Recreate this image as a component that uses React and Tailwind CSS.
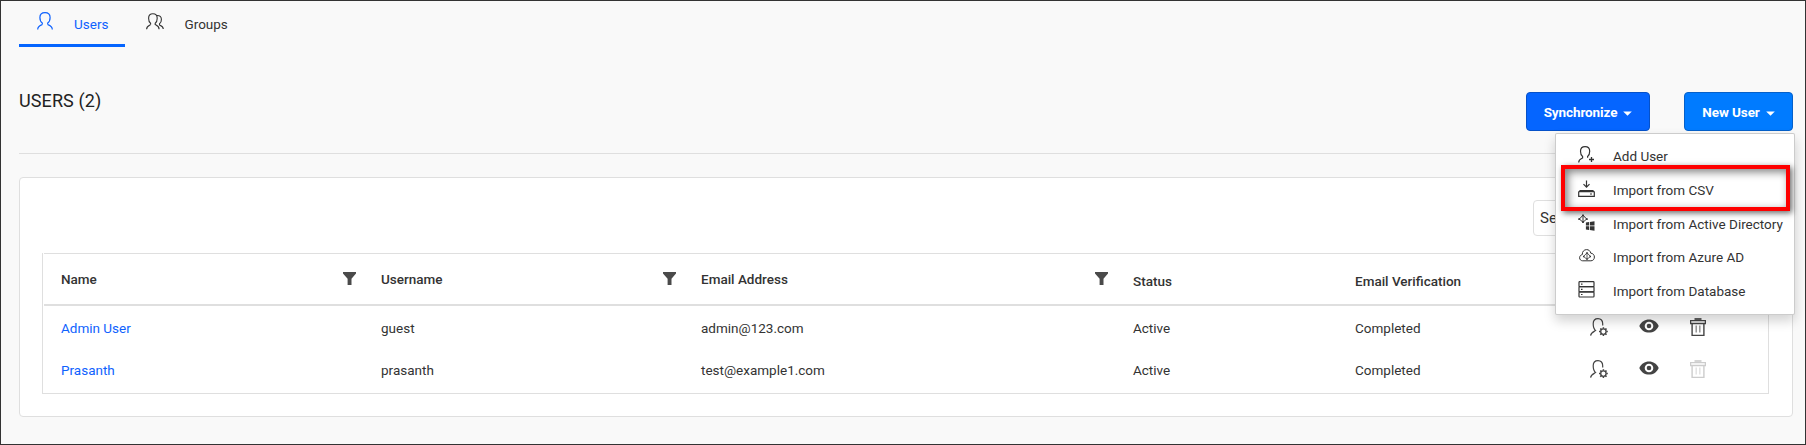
const HEAD =
  'M5.3 12.6V11C4 10.2 2.9 8 2.9 5.6C2.9 2.6 4.9 .7 8 .7C11.100 .7 13.100 2.600 13.100 5.600C13.100 8 12 10.200 10.700 11V12.600';

function UserIcon() {
  return (
    <svg width="16" height="18" viewBox="0 0 16 18" fill="none" stroke="currentColor" strokeWidth="1.2">
      <path d={HEAD} />
      <path d="M5.3 12.500C3.600 13.300 .7 14 .7 17.400M10.700 12.500C12.400 13.300 15.300 14 15.300 17.400" />
    </svg>
  );
}

function GroupIcon() {
  return (
    <svg width="18" height="17" viewBox="0 0 18 17" fill="none" stroke="currentColor" strokeWidth="1.1">
      <path d="M4.600 11.600V10.200C3.400 9.400 2.600 7.500 2.600 5.200C2.600 2.500 4.200 .7 6.900 .7C9.600 .7 11.200 2.500 11.200 5.200C11.200 7.500 10.400 9.400 9.200 10.200V11.600C11 12.400 13.100 13 13.100 16.200" />
      <path d="M4.600 11.600C3 12.400 .6 13 .6 16.200" />
      <path d="M10.800 2.600C13.800 2.300 15.400 3.900 15.400 6.400C15.400 8.400 14.700 9.900 13.500 10.700V12C15.200 12.700 17.300 13.300 17.300 15.900" />
    </svg>
  );
}

function AddUserIcon() {
  return (
    <svg width="17" height="17" viewBox="0 0 17 17" fill="none" stroke="currentColor" strokeWidth="1.2">
      <path d="M.7 16.400C.7 13.500 3 12.800 4.600 12V10.500C3.400 9.600 2.500 7.600 2.500 5.200C2.500 2.500 4.300 .6 7.100 .6C9.900 .6 11.700 2.500 11.700 5.200C11.700 7.600 10.800 9.600 9.600 10.500V11.800" />
      <path d="M13.500 11V16M11 13.500H16" strokeWidth="1.300" />
    </svg>
  );
}

function ImportIcon() {
  return (
    <svg width="17" height="17" viewBox="0 0 17 17" fill="none" stroke="currentColor" strokeWidth="1.200">
      <path d="M8.500 .5V7M5.500 4.200L8.500 7.200L11.500 4.200" />
      <path d="M2.200 10.500H14.800L16.300 12V16.300H.7V12ZM.7 11.700H16.300M12 14H14" />
    </svg>
  );
}

function DirectoryIcon() {
  return (
    <svg width="17" height="17" viewBox="0 0 17 17" fill="none" stroke="currentColor" strokeWidth="1">
      <path d="M5 1.200L8.600 5L5 8.300L1.400 5ZM5 1.200V8.300" />
      <path d="M4.200 .4H5.800V2H4.200ZM.3 4.300H1.900V5.900H.3ZM8.100 4.300H9.700V5.900H8.100ZM4.200 7.300H5.800V8.900H4.200Z" fill="currentColor" stroke="none" />
      <path d="M7.900 8.400L11 8V11.600H7.900ZM11.800 7.900L16.500 7.200V11.600H11.800ZM7.900 12.300H11V16L7.900 15.600ZM11.800 12.300H16.500V16.700L11.800 16.100Z" fill="currentColor" stroke="none" />
    </svg>
  );
}

function CloudIcon() {
  return (
    <svg width="16" height="13" viewBox="0 0 16 13" fill="none" stroke="currentColor" strokeWidth="1">
      <path d="M3.700 11.800C2 11.800 .6 10.600 .6 8.800C.6 7 1.700 6 3.300 5.600C3.100 2.700 5 .6 7.600 .6C9.700 .6 11.300 1.900 11.800 4.200C13.900 4.300 15.400 5.900 15.400 8C15.400 10.200 14 11.800 11.900 11.800Z" />
      <path d="M8 3.800L11.400 7.500L8 10.300L4.600 7.500ZM8 3.800V10.300" strokeWidth=".8" />
      <path d="M7.300 3.200H8.700V4.600H7.300ZM4 6.800H5.400V8.200H4ZM10.600 6.800H12V8.200H10.600ZM7.300 9.400H8.700V10.800H7.300Z" fill="currentColor" stroke="none" />
    </svg>
  );
}

function DatabaseIcon() {
  return (
    <svg width="17" height="17" viewBox="0 0 17 17" fill="none" stroke="currentColor" strokeWidth="1.200">
      <rect x="1" y=".7" width="15" height="4.900" rx=".8" />
      <rect x="1" y="5.700" width="15" height="5.100" rx=".8" />
      <rect x="1" y="10.900" width="15" height="5.100" rx=".8" />
      <path d="M3 3.100H4.500M3 8.300H4.500M3 13.500H4.500" />
    </svg>
  );
}

function UserGearIcon() {
  return (
    <svg width="18" height="18" viewBox="0 0 18 18" fill="none" stroke="currentColor" strokeWidth="1.200">
      <path d="M.6 17.600C.8 14.700 3.100 14.100 5.600 12.600C3.900 11.200 3.200 8.500 3.200 5.800C3.200 2.500 5 .7 8 .7C11 .7 12.700 2.500 12.700 5.800V7.600" />
      <circle cx="13.400" cy="13.600" r="2.700" strokeWidth="1.300" />
      <path d="M13.400 9.200V10.700M13.400 16.500V18M9 13.600H10.500M16.300 13.600H17.800M10.300 10.500L11.400 11.600M15.400 15.600L16.500 16.700M16.500 10.500L15.400 11.600M11.400 15.600L10.300 16.700" strokeWidth="1.500" />
    </svg>
  );
}

function EyeIcon() {
  return (
    <svg width="20" height="14" viewBox="0 0 20 14">
      <path d="M.3 7C2.200 2.700 5.700 .4 10 .4C14.300 .4 17.800 2.700 19.700 7C17.800 11.300 14.300 13.600 10 13.600C5.700 13.600 2.200 11.300 .3 7Z" fill="currentColor" />
      <circle cx="10" cy="7" r="3.300" fill="none" stroke="#fff" strokeWidth="2" />
    </svg>
  );
}

function TrashIcon() {
  return (
    <svg width="16" height="18" viewBox="0 0 16 18" fill="none" stroke="currentColor">
      <path d="M4.500 0H11.500V2.500H4.500Z" fill="currentColor" stroke="none" opacity=".85" />
      <path d="M.6 2.600H15.400V5.500H.6Z" strokeWidth="1.300" />
      <path d="M2.100 5.500V17.400H13.900V5.500" strokeWidth="1.400" />
      <path d="M6.200 7.500V14.500M9.800 7.500V14.500" strokeWidth="1.400" opacity=".6" />
    </svg>
  );
}

function FilterIcon() {
  return (
    <svg width="13" height="13" viewBox="0 0 13 13" fill="currentColor">
      <path d="M0 0H13V1.500L8.500 6.800V13H4.600V6.800L0 1.500Z" />
    </svg>
  );
}

function Caret() {
  return (
    <svg width="9" height="5" viewBox="0 0 9 5" fill="currentColor">
      <path d="M.2 .4H8.800L4.500 4.700Z" />
    </svg>
  );
}

const menuItems = [
  { label: 'Add User', Icon: AddUserIcon },
  { label: 'Import from CSV', Icon: ImportIcon, marked: true },
  { label: 'Import from Active Directory', Icon: DirectoryIcon },
  { label: 'Import from Azure AD', Icon: CloudIcon },
  { label: 'Import from Database', Icon: DatabaseIcon },
];

const users = [
  { name: 'Admin User', username: 'guest', email: 'admin@123.com' },
  { name: 'Prasanth', username: 'prasanth', email: 'test@example1.com', locked: true },
];

function Menu() {
  return (
    <ul className="absolute top-[41px] -right-[2px] z-10 flex h-[182px] w-[240px] flex-col rounded-xs border border-black/20 bg-white pt-[5.45px] shadow-[0_6px_12px_rgba(0,0,0,0.175)]">
      {menuItems.map(({ label, Icon, marked }) => (
        <li key={label} className="relative flex h-[33.7px] shrink-0 items-center pl-[22px] text-[#333]">
          <span className="-mt-[3px] flex w-[17px] justify-center">
            <Icon />
          </span>
          <span className="ml-[18px] whitespace-nowrap">{label}</span>
          {marked && (
            <span className="absolute -top-[8px] left-[5px] z-10 h-[46px] w-[229px] border-4 border-[#fe0000] shadow-[2px_2px_6px_rgba(0,0,0,0.6),inset_3px_3px_8px_rgba(0,0,0,0.5)]" />
          )}
        </li>
      ))}
    </ul>
  );
}

function HeaderCell({ children, filter }) {
  return (
    <div className={`flex items-center justify-between pr-[8px] pl-[17px] ${filter ? '' : 'pt-[4px]'}`}>
      {children}
      {filter && (
        <span className="-mt-px text-[#4a4a4a]">
          <FilterIcon />
        </span>
      )}
    </div>
  );
}

export default function App() {
  return (
    <div className="flex h-[445px] w-[1806px] flex-col overflow-hidden border border-[#333] bg-[#f9f9f9] pr-[12px] pl-[18px] font-['Roboto',sans-serif] text-[13.5px] leading-[20px] text-[#333]">
      <nav className="flex h-[46px] shrink-0">
        <div className="flex w-[106px] border-b-[3px] border-[#0565ff] pt-[11px] pl-[18px] text-[#0f62fe]">
          <UserIcon />
          <span className="mt-[2px] ml-[21px]">Users</span>
        </div>
        <div className="flex pt-[12px] pl-[21px]">
          <GroupIcon />
          <span className="mt-[1px] ml-[20.5px]">Groups</span>
        </div>
      </nav>

      <header className="flex h-[107px] shrink-0 justify-between border-b border-[#dfdfdf] pt-[45px]">
        <h1 className="mt-[-3px] text-[18px] leading-[24px] tracking-[0.1px] text-[#222]">USERS (2)</h1>
        <div className="flex h-[39px] gap-[34px] font-bold text-white">
          <button className="flex w-[124px] items-center justify-center gap-[6px] rounded border border-[#0551c9] bg-[#0565ff] tracking-[-0.1px]">
            Synchronize <span className="mt-[4px]"><Caret /></span>
          </button>
          <div className="relative font-normal">
            <button className="flex h-full w-[109px] items-center justify-center gap-[6px] rounded border border-[#0560c9] bg-[#007bff] font-bold tracking-[-0.1px]">
              New User <span className="mt-[4px]"><Caret /></span>
            </button>
            <Menu />
          </div>
        </div>
      </header>

      <main className="mt-[23px] h-[240px] shrink-0 rounded border border-[#dfdfdf] bg-white pr-[23px] pl-[22px]">
        <div className="flex h-[75px] justify-end pt-[22px]">
          <div className="flex h-[36px] w-[236px] items-center rounded border border-[#dfdfdf] pl-[6px] text-[15px]">Search</div>
        </div>
        <section className="h-[141px] border-x border-b border-[#dfdfdf]">
          <div className="ml-px grid h-[53px] grid-cols-[320px_320px_432px_222px_1fr] border-t border-b-2 border-t-[#dfdfdf] border-b-[#dfdfdf] font-medium">
            <HeaderCell filter>Name</HeaderCell>
            <HeaderCell filter>Username</HeaderCell>
            <HeaderCell filter>Email Address</HeaderCell>
            <HeaderCell>Status</HeaderCell>
            <HeaderCell>Email Verification</HeaderCell>
          </div>
          <div className="pt-px">
            {users.map((user) => (
              <div key={user.name} className="grid h-[42px] grid-cols-[320px_320px_432px_222px_1fr] items-center pl-[18px]">
                <a className="text-[#0f62fe]">{user.name}</a>
                <span>{user.username}</span>
                <span>{user.email}</span>
                <span>Active</span>
                <div className="flex items-center">
                  <span className="w-[235px]">Completed</span>
                  <span className="-mt-[2px] flex items-center text-[#444]">
                    <UserGearIcon />
                    <span className="-mt-[2px] ml-[30.5px]"><EyeIcon /></span>
                    <span className={`ml-[31.5px] ${user.locked ? 'text-[#ccc]' : ''}`}><TrashIcon /></span>
                  </span>
                </div>
              </div>
            ))}
          </div>
        </section>
      </main>
    </div>
  );
}
